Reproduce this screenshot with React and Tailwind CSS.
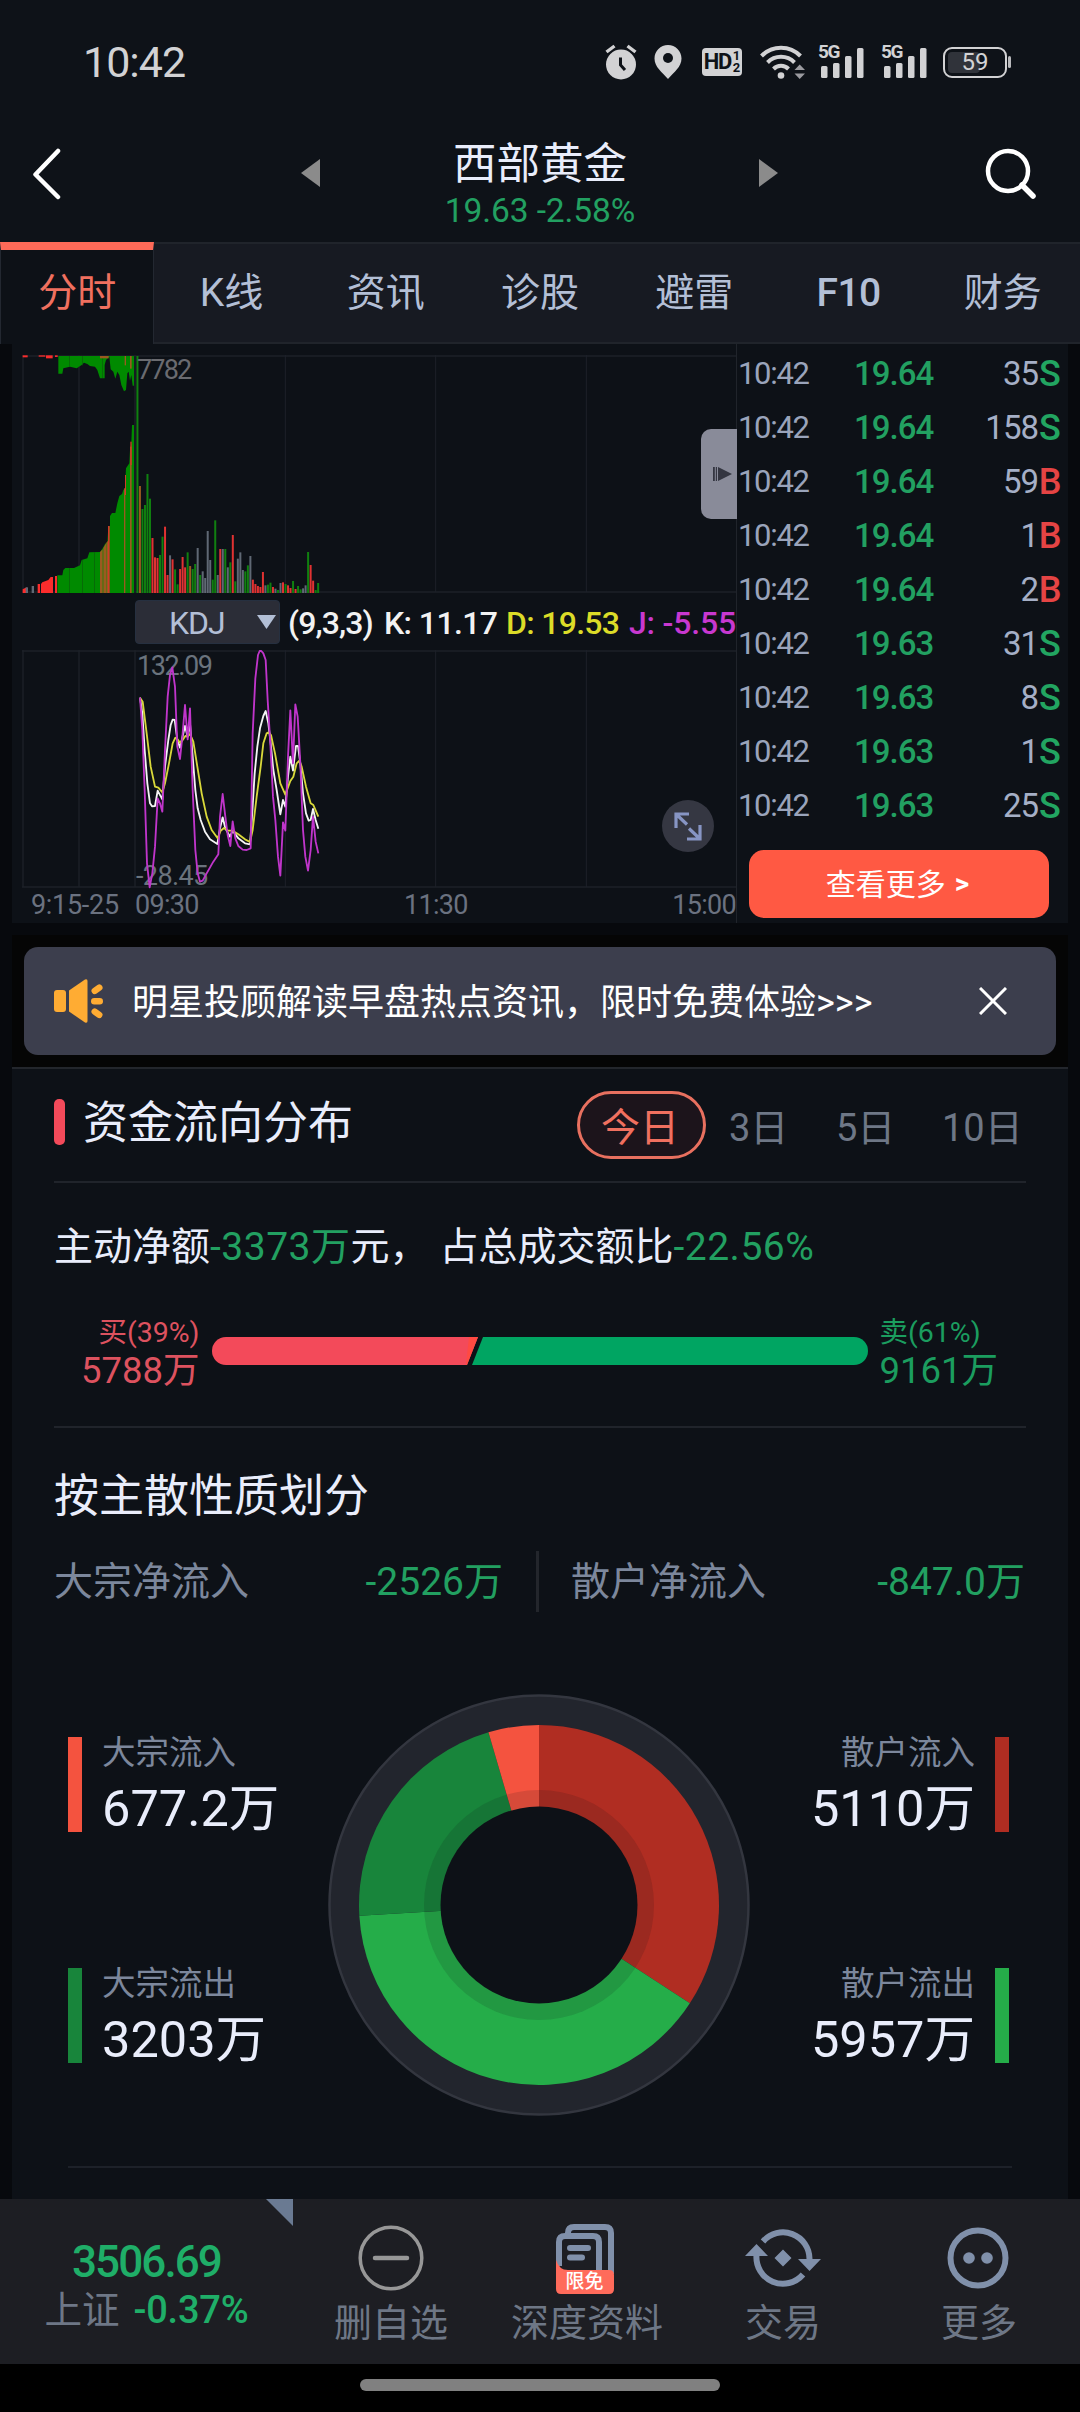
import React from 'react';
import clsx from 'clsx';

const TABS = ['分时', 'K线', '资讯', '诊股', '避雷', 'F10', '财务'];

const TRADES = [
  { time: '10:42', price: '19.64', volume: '35', side: 'S' },
  { time: '10:42', price: '19.64', volume: '158', side: 'S' },
  { time: '10:42', price: '19.64', volume: '59', side: 'B' },
  { time: '10:42', price: '19.64', volume: '1', side: 'B' },
  { time: '10:42', price: '19.64', volume: '2', side: 'B' },
  { time: '10:42', price: '19.63', volume: '31', side: 'S' },
  { time: '10:42', price: '19.63', volume: '8', side: 'S' },
  { time: '10:42', price: '19.63', volume: '1', side: 'S' },
  { time: '10:42', price: '19.63', volume: '25', side: 'S' },
];

const BAR_COLORS = { g: '#108010', r: '#e03232', b: '#9a5a20', n: '#5f6874' };

// One bar per minute after the open: colour key + top of the bar
const MINUTE_BARS = [
  'g48', 'b438', 'g507', 'g495', 'g402', 'g476', 'r594', 'r652', 'r654', 'g645', 'g590', 'r560',
  'r705', 'n646', 'r658', 'g688', 'g733', 'r687', 'r651', 'r682', 'g637', 'b678', 'g687', 'g672',
  'n624', 'g705', 'n694', 'n714', 'n573', 'n660', 'g719', 'g541', 'n705', 'r627', 'n627', 'g627',
  'n682', 'g667', 'r585', 'g724', 'n656', 'n637', 'n690', 'g694', 'g676', 'n648', 'r719', 'r732',
  'r738', 'r741', 'r696', 'n736', 'g734', 'g728', 'r741', 'n746', 'g750', 'n729', 'r727', 'g732',
  'r736', 'r744', 'g723', 'r747', 'g738', 'g748', 'n745', 'n736', 'g636', 'r675', 'r722', 'g750',
  'g729',
];

const K_LINE =
  '420,323 427,370 434,480 442,580 450,640 456,649 465,648 473,602 487,628 495,530 505,450 512,405 518,389 524,390 532,450 540,473 555,408 563,440 570,400 578,500 586,600 593,655 602,690 615,725 630,748 652,762 660,715 668,682 676,715 690,740 698,722 715,745 735,760 750,763 756,680 764,550 772,470 780,415 790,378 797,363 805,400 812,460 820,540 830,600 841,673 849,630 856,650 864,560 871,500 879,542 888,468 894,468 901,520 909,610 918,670 926,692 932,690 939,657 947,690 955,716';
const D_LINE =
  '420,323 428,335 440,430 452,530 465,590 475,593 487,607 495,580 507,520 518,460 526,443 532,447 540,458 548,450 556,438 563,440 570,432 580,455 592,530 605,610 620,680 635,720 653,745 662,722 672,714 685,722 698,722 715,733 735,748 750,756 758,720 770,620 782,530 790,460 800,430 806,427 813,435 825,490 841,580 856,614 871,573 880,560 890,520 898,512 905,530 918,590 932,640 940,645 955,680';
const J_LINE =
  '420,323 427,420 434,600 441,820 449,892 457,850 465,770 473,625 480,640 487,665 495,480 503,320 510,255 517,232 525,290 532,470 540,507 548,430 555,345 563,448 570,355 578,600 586,780 593,850 600,875 608,872 620,850 640,815 655,793 660,680 668,612 676,680 683,735 691,768 698,694 706,745 715,768 728,779 740,780 752,775 758,430 766,265 774,195 779,183 784,183 790,190 797,210 803,330 811,460 819,620 826,690 834,800 841,857 849,697 856,722 864,500 871,361 879,520 886,343 893,380 901,520 909,720 916,800 924,842 932,780 939,680 947,755 955,790';

function SignalIcon() {
  return (
    <div className="relative h-9 w-[47px]">
      <span className="absolute left-0 -top-[2px] text-[19px] leading-[20px] font-bold tracking-[-1.5px]">5G</span>
      <svg className="h-9 w-[47px]" viewBox="0 0 47 36" fill="currentColor">
        <rect x="3" y="22" width="6.500" height="12" rx="1.5" />
        <rect x="15" y="19" width="6.500" height="15" rx="1.5" />
        <rect x="27" y="12" width="6.500" height="22" rx="1.5" />
        <rect x="39" y="4" width="6.500" height="30" rx="1.5" />
      </svg>
    </div>
  );
}

function StatusBar() {
  return (
    <div className="flex h-[124px] items-center pl-[83px] pr-[69px] text-[#d2d2d4]">
      <span className="text-[43px] tracking-[-1px]">10:42</span>
      <div className="ml-auto flex items-center">
        <svg className="mr-[17px] h-[36px] w-[32px]" viewBox="0 0 32 36">
          <circle cx="16" cy="20.5" r="15" fill="currentColor" />
          <path d="M1.5 8 L9.5 2 M30.5 8 L22.5 2" stroke="currentColor" strokeWidth="3.4" />
          <path d="M15.5 13.5 V21 L20 26" stroke="#0e1218" strokeWidth="3" fill="none" />
        </svg>
        <svg className="mr-[20px] h-[36px] w-[28px]" viewBox="0 0 28 36">
          <path
            d="M14 1 C6.5 1 .5 7 .5 14.5 C.5 23 8 28 14 35 C20 28 27.500 23 27.500 14.500 C27.500 7 21.500 1 14 1 Z"
            fill="currentColor"
          />
          <circle cx="14" cy="14" r="5" fill="#0e1218" />
        </svg>
        <div className="mr-[18px] flex h-[28px] w-[40px] items-center justify-center rounded-[4px] bg-[#d2d2d4] text-[#0e1218]">
          <span className="text-[22px] leading-none font-bold tracking-[-1.5px]">HD</span>
          <span className="ml-[2px] flex flex-col text-[13px] leading-[12px] font-bold">
            <span>1</span>
            <span>2</span>
          </span>
        </div>
        <svg className="mr-[13px] h-[36px] w-[45px]" viewBox="0 0 45 36" fill="none">
          <path d="M1.500 12 A27 27 0 0 1 40.500 12" stroke="currentColor" strokeWidth="4" />
          <path d="M7.500 18.500 A19 19 0 0 1 34.500 18.500" stroke="currentColor" strokeWidth="4" />
          <path d="M13.500 25 A10.500 10.500 0 0 1 28.500 25" stroke="currentColor" strokeWidth="4" />
          <circle cx="21" cy="31.500" r="3.300" fill="currentColor" />
          <path d="M34.500 26 L39.700 20.500 L45 26 Z M34.500 29.500 L39.700 35 L45 29.500 Z" fill="#9b9ba0" />
        </svg>
        <SignalIcon />
        <div className="w-[16px]" />
        <SignalIcon />
        <div className="ml-[15px] flex h-[31px] w-[64px] items-center rounded-[9px] border-2 border-[#d2d2d4] p-[3px]">
          <div className="relative flex h-full w-full items-center justify-center">
            <div className="absolute left-0 h-full w-[32px] rounded-[4px] bg-[#30333a]" />
            <span className="relative text-[24px] leading-none">59</span>
          </div>
        </div>
        <div className="ml-[1px] h-[12px] w-[3px] rounded-full bg-[#b9b9bc]" />
      </div>
    </div>
  );
}

function TitleBar() {
  return (
    <div className="flex h-[118px] items-center justify-between pl-[32px] pr-[42px]">
      <svg className="mt-[-19px] h-[52px] w-[54px]" viewBox="0 0 54 52" fill="none">
        <path d="M26 3 L3.500 26.500 L26 49" stroke="#fff" strokeWidth="4.500" strokeLinecap="round" strokeLinejoin="round" />
      </svg>
      <div className="mr-[-9px] flex items-center gap-[124px]">
        <svg className="mt-[-20px] h-[28px] w-[19px]" viewBox="0 0 19 28">
          <path d="M19 0 V28 L0 14 Z" fill="#8b8b8b" />
        </svg>
        <div className="flex w-[192px] flex-col items-center">
          <span className="h-[55px] text-[43.500px] leading-[56px] whitespace-nowrap text-[#e9edfb]">西部黄金</span>
          <span className="text-[33.500px] leading-[38px] tracking-[-0.100px] whitespace-nowrap text-[#22a061]">19.63 -2.58%</span>
        </div>
        <svg className="mt-[-20px] ml-[-1px] h-[28px] w-[19px]" viewBox="0 0 19 28">
          <path d="M0 0 V28 L19 14 Z" fill="#8b8b8b" />
        </svg>
      </div>
      <svg className="mt-[-18px] h-[54px] w-[54px]" viewBox="0 0 54 54" fill="none">
        <circle cx="24" cy="24" r="20" stroke="#fff" strokeWidth="4.500" />
        <path d="M38 38 L49 49" stroke="#fff" strokeWidth="5.500" strokeLinecap="round" />
      </svg>
    </div>
  );
}

function Tabs() {
  return (
    <div className="grid h-[102px] grid-cols-7 border-y-2 border-[#20242b] bg-[#171a22]">
      {TABS.map((tab, i) => (
        <button
          key={tab}
          className={clsx(
            'flex items-center justify-center text-[39px]',
            i === 0
              ? '-my-[2px] border-t-8 border-r border-l border-t-[#ff6a58] border-r-[#232831] border-l-[#232831] bg-[#0d1117] pb-[7px] text-[#f0705f]'
              : 'text-[#b3bfd6]',
            tab === 'F10' && 'font-medium tracking-[-0.5px]'
          )}
        >
          {tab}
        </button>
      ))}
    </div>
  );
}

// Grid lines shared by both charts, drawn in a 2142 x 717 box
function Grid({ top }) {
  const bottom = top + 711;
  return (
    <g stroke="#1d2129" strokeWidth="4">
      <path d={`M66 ${top + 3} H2208 M66 ${bottom} H2208`} />
      <path d={`M69 ${top} V${bottom} M237 ${top} V${bottom} M405 ${top} V${bottom}`} />
      <path d={`M856 ${top} V${bottom} M1307 ${top} V${bottom} M1759 ${top} V${bottom}`} strokeWidth="3" />
    </g>
  );
}

function VolumeChart() {
  return (
    <div className="relative h-[239px]">
      <svg className="block h-[239px] w-[714px]" viewBox="66 45 2142 717">
        <Grid top={45} />
        <g fill="#008a00">
          <path d="M172 759 V706 H187 L190 690 L196 684 H222 L240 676 L245 660 L262 655 L268 637 L300 636 L308 625 L315 612 L322 606 L325 560 L330 558 V528 L336 519 H346 L352 490 L358 468 L366 462 L370 450 L375 445 L378 385 L388 370 L390 330 L394 310 L396 255 H402 V759 Z" />
          <path d="M175 48 V101 H187 L190 85 L210 80 L230 85 L245 75 L252 68 L262 72 L270 78 L285 80 L292 90 L300 115 H314 V75 L318 60 L328 50 L332 88 L340 95 L346 116 L352 95 L358 105 L364 135 L372 154 L378 150 L382 100 L386 95 L390 122 L394 105 L398 137 H402 V48 Z" />
        </g>
        <g fill="#0b5c0b">
          <rect x="207" y="684" width="2" height="75" />
          <rect x="246" y="660" width="2" height="99" />
          <rect x="283" y="637" width="2" height="122" />
          <rect x="207" y="48" width="2" height="33" />
          <rect x="246" y="48" width="2" height="28" />
          <rect x="306" y="48" width="2" height="66" />
        </g>
        <g fill="#fb2c2c">
          <path d="M68 759 V748 L80 742 V759 Z" />
          <rect x="113" y="732" width="7" height="27" />
          <path d="M123 759 V732 L127 727 L145 720 L152 711 H159 V759 Z" />
          <rect x="165" y="708" width="6" height="51" />
          <rect x="68" y="46" width="15" height="6" />
          <rect x="116" y="46" width="20" height="4" />
          <rect x="138" y="46" width="20" height="9" />
          <rect x="165" y="46" width="8" height="5" />
        </g>
        <g fill="#5f6874">
          <rect x="77" y="742" width="7" height="17" />
          <rect x="95" y="738" width="7" height="21" />
        </g>
        <g fill="#9a5a20">
          <path d="M300 759 V636 L308 628 V759 Z M310 759 V624 L318 610 V759 Z M319 759 V608 L326 600 V759 Z" />
          <rect x="372" y="445" width="4" height="314" />
          <rect x="390" y="320" width="5" height="439" />
          <rect x="300" y="48" width="26" height="7" />
          <rect x="374" y="48" width="4" height="28" />
          <rect x="390" y="48" width="5" height="38" />
        </g>
        <g fill="#d23a28">
          <rect x="324" y="558" width="5" height="201" />
          <rect x="375" y="405" width="3" height="60" />
          <rect x="391" y="305" width="4" height="70" />
        </g>
        {MINUTE_BARS.map((bar, i) => {
          const top = Number(bar.slice(1));
          return <rect key={i} x={409.3 + i * 7.53} y={top} width="6" height={759 - top} fill={BAR_COLORS[bar[0]]} />;
        })}
      </svg>
      <span className="absolute top-[-1px] left-[115px] text-[27px] leading-[32px] tracking-[-1.8px] text-[#6a6b70]">7782</span>
      <div className="absolute top-[74px] right-[-1px] flex h-[90px] w-[36px] items-center justify-end rounded-l-[10px] bg-[#898b99] pr-[5px]">
        <svg className="h-[16px] w-[20px]" viewBox="0 0 20 16" fill="#343641">
          <rect x="1" y="1" width="1.800" height="14" />
          <rect x="3.800" y="1" width="1.200" height="14" />
          <path d="M6 1 V15 L20 8 Z" />
        </svg>
      </div>
    </div>
  );
}

function IndicatorRow() {
  return (
    <div className="flex h-[56px] items-center pl-[113px] text-[32px] font-medium tracking-[-1px] whitespace-nowrap text-[#f2f2f2]">
      <div className="flex h-[44px] w-[145px] items-center justify-between rounded-[4px] border border-[#263040] bg-[#2b2d37] pr-[3px] pl-[33px] text-[#b3bfd6]">
        <span className="mt-[2px] text-[32px] font-normal">KDJ</span>
        <svg className="mt-[-1px] h-[14px] w-[19px]" viewBox="0 0 19 14" fill="currentColor">
          <path d="M0 0 H19 L9.500 14 Z" />
        </svg>
      </div>
      <span className="w-[98px] pt-[2px] pl-[8px] tracking-[-0.900px]">(9,3,3)</span>
      <span className="w-[123px] pt-[2px] pl-[6px] tracking-[-0.600px]">K: 11.17</span>
      <span className="w-[121px] pt-[2px] pl-[5px] tracking-[-0.700px] text-[#dcdc28]">D: 19.53</span>
      <span className="pt-[2px] pl-[7px] tracking-[-0.200px] text-[#c838d0]">J: -5.55</span>
    </div>
  );
}

function KdjChart() {
  return (
    <div className="relative h-[239px]">
      <svg className="block h-[239px] w-[714px]" viewBox="66 180 2142 717" fill="none">
        <Grid top={180} />
      </svg>
      <span className="absolute top-0 left-[115px] text-[27px] leading-[32px] tracking-[-1.400px] text-[#6a737d]">132.09</span>
      <span className="absolute top-[214px] left-[114px] text-[27px] leading-[24px] tracking-[-0.600px] text-[#6a737d]">-28.45</span>
      <svg className="absolute top-0 left-0 h-[239px] w-[714px]" viewBox="66 180 2142 717" fill="none">
        <g strokeWidth="5.500" strokeLinejoin="round">
          <polyline points={K_LINE} stroke="#f5f5f5" />
          <polyline points={D_LINE} stroke="#d8d83a" />
          <polyline points={J_LINE} stroke="#c035cb" />
        </g>
      </svg>
      <button className="absolute right-[22px] bottom-[37px] flex size-[52px] items-center justify-center rounded-full bg-[#353742]">
        <svg className="size-[30px]" viewBox="0 0 30 30" fill="none" stroke="#8795c4" strokeWidth="3.200">
          <path d="M3 17 V3 H16 M3 3 L14 13.500" />
          <path d="M27 14 V28 H14 M27 28 L16 17.500" />
        </svg>
      </button>
    </div>
  );
}

function TradeList() {
  return (
    <div className="flex w-[332px] flex-col border-l border-[#20242b] pt-[3px]">
      {TRADES.map((trade, i) => (
        <div key={i} className="flex h-[54px] items-center pl-[1px]">
          <span className="w-[116px] text-[31px] tracking-[-1.300px] text-[#9aa4bb]">{trade.time}</span>
          <span className="w-[85px] text-[33px] font-medium tracking-[-1px] text-[#22a061]">{trade.price}</span>
          <span className="ml-auto text-[33px] tracking-[-1px] text-[#a5afc6]">{trade.volume}</span>
          <span
            className={clsx(
              'mr-[6px] w-[24px] text-center text-[36px] font-medium',
              trade.side === 'S' ? 'text-[#22a561]' : 'text-[#e54444]'
            )}
          >
            {trade.side}
          </span>
        </div>
      ))}
      <button className="mt-[17px] ml-[12px] flex h-[68px] w-[300px] items-center justify-center gap-[9px] rounded-[15px] bg-[#ff5943] pr-[3px] text-[30px] text-white">
        查看更多
        <span className="text-[28px] font-bold">&gt;</span>
      </button>
    </div>
  );
}

function ChartPanel() {
  return (
    <div className="flex h-[579px] bg-[#0d1117]">
      <div className="w-[724px] pt-[11px] pl-[10px]">
        <VolumeChart />
        <IndicatorRow />
        <KdjChart />
        <div className="flex h-[32px] items-center pt-[1px] text-[27px] tracking-[-0.700px] text-[#6b7280]">
          <span className="w-[113px] pl-[9px] tracking-[-0.300px] whitespace-nowrap">9:15-25</span>
          <span className="w-[269px]">09:30</span>
          <span>11:30</span>
          <span className="ml-auto">15:00</span>
        </div>
      </div>
      <TradeList />
    </div>
  );
}

function NoticeBanner() {
  return (
    <div className="mt-[12px] bg-[#050505] px-[12px] py-[12px]">
      <div className="flex h-[108px] items-center rounded-[14px] bg-[#3c3e4d] pr-[49px] pl-[30px]">
        <svg className="h-[44px] w-[50px]" viewBox="0 0 50 44" fill="#ffac33">
          <rect x="0" y="11" width="12" height="22" rx="3" />
          <path d="M15 11.500 L31 .5 Q33.500 -.5 33.500 2 V42 Q33.500 44.500 31 43.500 L15 32.500 Z" />
          <rect x="37" y="19" width="12" height="6.500" rx="3.250" />
          <rect x="37" y="7" width="12" height="6.500" rx="3.250" transform="rotate(-35 43 10.200)" />
          <rect x="37" y="31" width="12" height="6.500" rx="3.250" transform="rotate(35 43 34.200)" />
        </svg>
        <span className="mt-[4px] ml-[28px] text-[36px] text-white">明星投顾解读早盘热点资讯，限时免费体验&gt;&gt;&gt;</span>
        <svg className="ml-auto size-[28px]" viewBox="0 0 28 28" fill="none">
          <path d="M1 1 L27 27 M27 1 L1 27" stroke="#fff" strokeWidth="3" />
        </svg>
      </div>
    </div>
  );
}

function FundFlow() {
  return (
    <div className="mx-[42px]">
      <div className="flex h-[114px] items-center border-b-2 border-[#20242b]">
        <div className="mt-[-7px] h-[46px] w-[11px] rounded-[5px] bg-[#f34a5a]" />
        <h2 className="mt-[-3px] ml-[18px] text-[45px] text-[#e9edfb]">资金流向分布</h2>
        <div className="ml-auto flex items-center text-[38px] text-[#6e7786]">
          <span className="flex h-[68px] w-[129px] items-center justify-center rounded-full border-[3px] border-[#e8705f] bg-[#1c141b] pt-[6px] pr-[3px] text-[39px] text-[#f0705f]">
            今日
          </span>
          <span className="ml-[23px] w-[107px] pt-[6px]">3日</span>
          <span className="w-[106px] pt-[6px]">5日</span>
          <span className="mr-[2px] w-[82px] pt-[6px]">10日</span>
        </div>
      </div>
      <p className="flex h-[128px] items-center text-[39px] whitespace-pre text-[#e9edfb]">
        主动净额<span className="tracking-[0.500px] text-[#22a061]">-3373万</span>元，<span className="w-[11px]" />占总成交额比
        <span className="tracking-[0.500px] text-[#22a061]">-22.56%</span>
      </p>
      <div className="flex h-[117px] justify-center border-b-2 border-[#20242b] pr-[1px]">
        <div className="flex w-[120px] flex-col items-end pt-[4px] text-[#dd525f]">
          <span className="text-[28.500px] leading-[35px]">买(39%)</span>
          <span className="text-[36.500px] leading-[42px]">5788万</span>
        </div>
        <svg className="mx-[12px] mt-[26px] h-[28px] w-[656px]" viewBox="0 0 656 28">
          <path d="M14 0 H266 L255 28 H14 A14 14 0 0 1 14 0 Z" fill="#f34a5a" />
          <path d="M271 0 H642 A14 14 0 0 1 642 28 H260 Z" fill="#00a562" />
          <path d="M257 0 H266 L255 28 H254 Z" fill="#ff4a42" />
        </svg>
        <div className="flex w-[120px] flex-col pt-[4px] text-[#1b9d5f]">
          <span className="text-[28.500px] leading-[35px]">卖(61%)</span>
          <span className="text-[36.500px] leading-[42px]">9161万</span>
        </div>
      </div>
    </div>
  );
}

const SLICES = [
  { value: 5110, color: '#b02d22' },
  { value: 5957, color: '#25ad49' },
  { value: 3203, color: '#18853b' },
  { value: 677.2, color: '#f4533f' },
];

function Donut() {
  const total = SLICES.reduce((sum, s) => sum + s.value, 0);
  let acc = 0;
  const point = (v) => {
    const a = (v / total) * Math.PI * 2;
    return `${211 + 180 * Math.sin(a)} ${211 - 180 * Math.cos(a)}`;
  };
  return (
    <svg className="ml-[-1px] h-[422px] w-[422px]" viewBox="0 0 422 422">
      <circle cx="211" cy="211" r="209.500" fill="#22252d" stroke="#33363f" strokeWidth="2.500" />
      {SLICES.map((slice) => {
        const start = point(acc);
        acc += slice.value;
        const large = slice.value / total > 0.5 ? 1 : 0;
        return <path key={slice.color} d={`M211 211 L${start} A180 180 0 ${large} 1 ${point(acc)} Z`} fill={slice.color} />;
      })}
      <circle cx="211" cy="211" r="115" fill="#0d1117" opacity="0.13" />
      <circle cx="211" cy="211" r="98.500" fill="#0d1117" />
    </svg>
  );
}

function Legend({ label, value, bar, right }) {
  return (
    <div className={clsx('flex h-[95px] gap-[20px]', right && 'flex-row-reverse')}>
      <div className={clsx('h-full w-[14px]', bar)} />
      <div className={clsx('flex flex-col', right && 'items-end')}>
        <span className="-mt-[5px] text-[33.500px] leading-[42px] text-[#7c879c]">{label}</span>
        <span className="mt-[3px] text-[50.500px] leading-[64px] text-[#e9edfb]">{value}</span>
      </div>
    </div>
  );
}

function HolderSplit() {
  return (
    <div className="mx-[42px]">
      <h2 className="pt-[35px] text-[45px] leading-[68px] text-[#e9edfb]">按主散性质划分</h2>
      <div className="mt-[20px] flex h-[61px] items-center text-[39px] text-[#7c879c]">
        <div className="flex w-[449px] justify-between pt-[2px]">
          <span>大宗净流入</span>
          <span className="text-[#22a061]">-2526万</span>
        </div>
        <div className="mr-[32px] ml-[33px] h-full w-[3px] bg-[#23262c]" />
        <div className="mr-[1px] flex flex-1 justify-between pt-[2px]">
          <span>散户净流入</span>
          <span className="text-[#22a061]">-847.0万</span>
        </div>
      </div>
      <div className="mx-[14px] mt-[82px] flex h-[474px] justify-between border-b-2 border-[#1d2129]">
        <div className="flex w-[249px] flex-col gap-[136px] pt-[43px]">
          <Legend label="大宗流入" value="677.2万" bar="bg-[#f4533f]" />
          <Legend label="大宗流出" value="3203万" bar="bg-[#18853b]" />
        </div>
        <Donut />
        <div className="mr-[3px] flex w-[247px] flex-col gap-[136px] pt-[43px]">
          <Legend right label="散户流入" value="5110万" bar="bg-[#b02d22]" />
          <Legend right label="散户流出" value="5957万" bar="bg-[#25ad49]" />
        </div>
      </div>
    </div>
  );
}

function NavItem({ label, children }) {
  return (
    <button className="flex w-[196px] flex-col items-center text-[38px] text-[#6e7786]">
      <span className="mt-[22px] flex h-[74px] items-center justify-center">{children}</span>
      <span className="leading-[56px] whitespace-nowrap">{label}</span>
    </button>
  );
}

function BottomBar() {
  return (
    <div className="flex h-[165px] bg-[#1d1e23]">
      <div className="relative flex w-[293px] flex-col items-center pt-[36px] text-[#1fae68]">
        <svg className="absolute top-0 right-0 h-[27px] w-[27px]" viewBox="0 0 27 27">
          <path d="M0 0 H27 V27 Z" fill="#6a7a92" />
        </svg>
        <span className="text-[44px] leading-[54px] font-medium tracking-[-1.900px]">3506.69</span>
        <span className="flex items-center text-[37.500px] leading-[42px]">
          <span className="text-[#6e7786]">上证</span>
          <span className="ml-[14px] text-[38px] font-medium tracking-[-0.200px]">-0.37%</span>
        </span>
      </div>
      <NavItem label="删自选">
        <svg className="size-[66px]" viewBox="0 0 66 66" fill="none" stroke="#979797">
          <circle cx="33" cy="33" r="30.800" strokeWidth="3.500" />
          <path d="M17 33 H49" strokeWidth="4.500" strokeLinecap="round" />
        </svg>
      </NavItem>
      <NavItem label="深度资料">
        <div className="relative mt-[1px] mr-[5px] h-[70px] w-[58px]">
          <svg className="h-[70px] w-[58px]" viewBox="0 0 58 70" fill="none" stroke="#8090aa" strokeWidth="6">
            <path d="M12 10 V9 Q12 3 18 3 H49 Q55 3 55 9 V50" />
            <path d="M3 42 V18 Q3 12 9 12 H37 Q43 12 43 18 V50" />
            <path d="M14 24 H32 M14 33.500 H26" strokeLinecap="round" />
            <path d="M0 36 Q3 46 12 46 H53 Q58 46 58 51 V65 Q58 70 53 70 H5 Q0 70 0 65 Z" fill="#ff6b5b" stroke="none" />
          </svg>
          <span className="absolute bottom-0 left-0 w-full text-center text-[19px] leading-[24px] font-medium text-white">限免</span>
        </div>
      </NavItem>
      <NavItem label="交易">
        <svg className="mr-[1px] h-[60px] w-[76px]" viewBox="0 0 76 60" fill="none" stroke="#8090aa" strokeWidth="6">
          <path d="M18 13.500 A26.500 26.500 0 0 1 64.500 31" />
          <path d="M58 46.500 A26.500 26.500 0 0 1 11.500 27" />
          <path d="M0 28 L11.500 16 L23 28 Z M53 31 L64.500 43 L76 31 Z M38 21.500 L46.500 30 L38 38.500 L29.500 30 Z" fill="#8090aa" stroke="none" />
        </svg>
      </NavItem>
      <NavItem label="更多">
        <svg className="mr-[2px] size-[62px]" viewBox="0 0 62 62" fill="none">
          <circle cx="31" cy="31" r="27.500" stroke="#8090aa" strokeWidth="6" />
          <circle cx="22" cy="31" r="5.800" fill="#8090aa" />
          <circle cx="40" cy="31" r="5.800" fill="#8090aa" />
        </svg>
      </NavItem>
    </div>
  );
}

export default function App() {
  return (
    <div
      lang="zh-CN"
      className="flex h-[2412px] w-[1080px] flex-col overflow-hidden bg-[#07090d] font-['Roboto','Noto_Sans_CJK_SC',sans-serif]"
    >
      <header className="bg-[#0e1218]">
        <StatusBar />
        <TitleBar />
        <Tabs />
      </header>
      <main className="mx-[12px] flex-1 overflow-hidden">
        <ChartPanel />
        <NoticeBanner />
        <div className="h-[1150px] border-t-2 border-[#23262c] bg-[#0d1117]">
          <FundFlow />
          <HolderSplit />
        </div>
      </main>
      <footer>
        <BottomBar />
        <div className="flex h-[48px] justify-center bg-black pt-[15px]">
          <div className="h-[12px] w-[360px] rounded-full bg-[#808080]" />
        </div>
      </footer>
    </div>
  );
}
